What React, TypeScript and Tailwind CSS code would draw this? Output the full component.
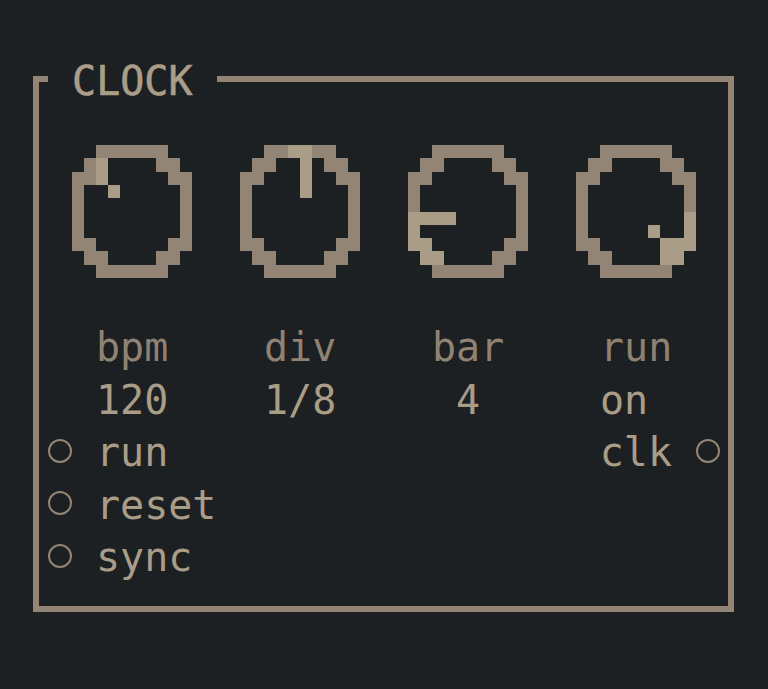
import React from 'react';

const RING: [number, number][] = [];
for (let c = 2; c <= 7; c++) { RING.push([0, c]); RING.push([9, c]); }
[[1, 1], [1, 2], [1, 7], [1, 8], [2, 0], [2, 1], [2, 8], [2, 9], [7, 0], [7, 1], [7, 8], [7, 9], [8, 1], [8, 2], [8, 7], [8, 8]].forEach(p => RING.push(p as [number, number]));
for (let r = 3; r <= 6; r++) { RING.push([r, 0]); RING.push([r, 9]); }

const knobs: { label: string; value: string; lit: [number, number][] }[] = [
  { label: 'bpm', value: '120', lit: [[1, 2], [2, 2], [3, 3]] },
  { label: 'div', value: '1/8', lit: [[0, 4], [0, 5], [1, 5], [2, 5], [3, 5]] },
  { label: 'bar', value: ' 4', lit: [[5, 0], [5, 1], [5, 2], [5, 3], [6, 0], [7, 0], [7, 1], [8, 1], [8, 2]] },
  { label: 'run', value: 'on', lit: [[5, 9], [6, 9], [6, 6], [7, 7], [7, 8], [7, 9], [8, 7], [8, 8]] },
];

function Knob({ lit }: { lit: [number, number][] }) {
  return (
    <svg width="120" height="133" viewBox="0 0 10 10" preserveAspectRatio="none" shapeRendering="crispEdges">
      {RING.map(([r, c]) => (
        <rect key={`b${r}-${c}`} x={c} y={r} width="1" height="1" fill="#928575" />
      ))}
      {lit.map(([r, c]) => (
        <rect key={`l${r}-${c}`} x={c} y={r} width="1" height="1" fill="#a99d88" />
      ))}
    </svg>
  );
}

function Port() {
  return (
    <svg width="24" height="24" viewBox="0 0 24 24" className="shrink-0 -mt-[3px]">
      <circle cx="12" cy="12" r="11" fill="none" stroke="#928575" strokeWidth="2" />
    </svg>
  );
}

export default function App() {
  return (
    <div className="w-[768px] h-[689px] bg-[#1d2022] pt-[76px] pl-[33px] font-['DejaVu_Sans_Mono',monospace] text-[40px] leading-[52.5px]">
      <div className="relative w-[701px] h-[536px] border-[6px] border-[#928575]">
        <div className="absolute left-[9px] -top-[27px] h-[52.5px] bg-[#1d2022] text-[#aa9e89] whitespace-pre [-webkit-text-stroke:0.6px_#aa9e89]">
          {' CLOCK '}
        </div>

        <div className="pt-[63px] pl-[33px]">
          <div className="flex gap-[48px]">
            {knobs.map(k => (
              <Knob key={k.label} lit={k.lit} />
            ))}
          </div>
          <div className="mt-[43px] grid grid-cols-[repeat(4,168px)]">
            {knobs.map(k => (
              <div key={k.label} className="pl-6 whitespace-pre">
                <div className="text-[#8f8272]">{k.label}</div>
                <div className="text-[#a99d88]">{k.value}</div>
              </div>
            ))}
          </div>
        </div>

        <div className="pl-[9px] pr-[8px] text-[#a99d88]">
          <div className="flex items-center h-[52.5px]">
            <Port />
            <span className="ml-6">run</span>
            <span className="ml-auto">clk</span>
            <span className="ml-6 flex"><Port /></span>
          </div>
          <div className="flex items-center h-[52.5px]">
            <Port />
            <span className="ml-6">reset</span>
          </div>
          <div className="flex items-center h-[52.5px]">
            <Port />
            <span className="ml-6">sync</span>
          </div>
        </div>
      </div>
    </div>
  );
}
